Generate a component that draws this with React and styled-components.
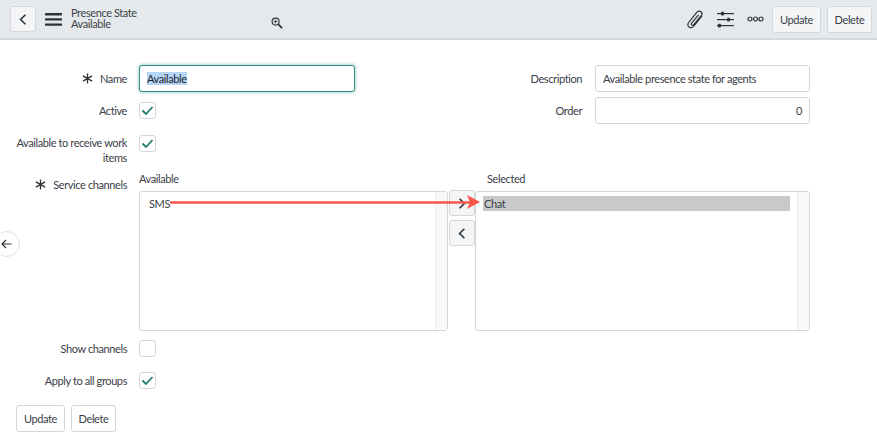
import styled, { createGlobalStyle } from 'styled-components';

const GlobalStyle = createGlobalStyle`
  html, body {
    margin: 0;
    padding: 0;
    background: #ffffff;
  }
  body {
    font-family: Lato, "Open Sans", sans-serif;
    font-size: 11px;
    letter-spacing: -0.4px;
    color: #3a4048;
    overflow: hidden;
  }
`;

const Page = styled.div`
  position: relative;
  width: 877px;
  height: 437px;
  overflow: hidden;
`;

// top bar
const Header = styled.header`
  display: flex;
  align-items: center;
  height: 38px;
  padding: 0 5px 0 10px;
  background: #e6e9eb;
  border-bottom: 2px solid #d6d9dc;
`;

const IconButton = styled.button`
  display: flex;
  align-items: center;
  justify-content: center;
  width: 26px;
  height: 26px;
  padding: 0;
  background: #f4f5f6;
  border: 1px solid #d4d6d9;
  border-radius: 3px;
  color: #2e3338;
`;

const Menu = styled.div`
  display: flex;
  margin-left: 9px;
  color: #2e3338;
`;

const HeaderTitle = styled.div`
  margin: -2px 0 0 9px;
  width: 200px;
  line-height: 11.5px;
  font-size: 11px;
  color: #3d4348;
`;

const Spacer = styled.div`
  flex: 1;
`;

const Tool = styled.div`
  display: flex;
  margin-top: ${(props) => props.$top || 0}px;
  margin-right: ${(props) => props.$gap || 0}px;
  color: #2e3338;
`;

const TextButton = styled.button`
  width: ${(props) => props.$width}px;
  height: 27px;
  padding: 0;
  margin-left: ${(props) => props.$gap || 0}px;
  background: ${(props) => (props.$plain ? '#ffffff' : '#f4f5f6')};
  border: 1px solid #d4d6d9;
  border-radius: 3px;
  font-family: inherit;
  font-size: 11px;
  letter-spacing: inherit;
  color: #3a4048;
`;

// form
const Form = styled.form`
  padding-top: 25px;
`;

const TopRows = styled.div`
  display: flex;
`;

const Column = styled.div`
  display: flex;
  flex-direction: column;
  width: ${(props) => props.$width}px;
`;

const Row = styled.div`
  display: flex;
  align-items: ${(props) => (props.$top ? 'flex-start' : 'center')};
  min-height: ${(props) => props.$height || 27}px;
  margin-bottom: ${(props) => props.$gap ?? 5}px;
`;

const Label = styled.label`
  display: flex;
  align-items: center;
  justify-content: flex-end;
  flex: none;
  width: ${(props) => props.$width || 127}px;
  margin-top: ${(props) => props.$offset || 0}px;
  margin-right: ${(props) => props.$margin || 12}px;
  line-height: 15px;
  text-align: right;
`;

const Required = styled.span`
  display: flex;
  margin-right: 7px;
  color: #2e3338;
`;

const TextInput = styled.div`
  box-sizing: border-box;
  display: flex;
  align-items: center;
  justify-content: ${(props) => (props.$right ? 'flex-end' : 'flex-start')};
  width: ${(props) => props.$width || 215}px;
  height: 27px;
  padding: 0 7px;
  background: #ffffff;
  border: 1px solid ${(props) => (props.$focused ? '#2f8f80' : '#d4d6d9')};
  border-radius: 3px;
  box-shadow: ${(props) => (props.$focused ? '0 0 3px 1px rgba(47, 143, 128, 0.35)' : 'none')};
`;

const Selection = styled.span`
  background: #b5d5fb;
  color: #1f2429;
`;

const CheckBox = styled.span`
  box-sizing: border-box;
  display: flex;
  align-items: center;
  justify-content: center;
  width: 17px;
  height: 17px;
  background: #ffffff;
  border: 1px solid #d4d6d9;
  border-radius: 3px;
  color: #1f7f6e;
`;

// slush bucket
const Bucket = styled.div`
  display: flex;
  flex-direction: column;
  width: ${(props) => props.$width}px;
`;

const BucketTitle = styled.div`
  height: 20px;
  padding-left: ${(props) => props.$indent || 0}px;
  line-height: 16px;
`;

const ListBox = styled.div`
  box-sizing: border-box;
  position: relative;
  height: 140px;
  padding: 4px 7px;
  background: #ffffff;
  border: 1px solid #d4d6d9;
  border-radius: 3px;
  &::after {
    content: '';
    position: absolute;
    top: 0;
    right: 0;
    bottom: 0;
    width: 11px;
    background: #f8f8f8;
    border-left: 1px solid #ececec;
  }
`;

const ListItem = styled.div`
  height: 15px;
  padding-left: ${(props) => (props.$selected ? 1 : 2)}px;
  width: ${(props) => props.$width}px;
  line-height: 16px;
  background: ${(props) => (props.$selected ? '#c9c9c9' : 'transparent')};
`;

const Mover = styled.div`
  display: flex;
  flex-direction: column;
  gap: 4px;
  width: 27px;
  margin-top: 19px;
  padding-left: 1px;
  box-sizing: border-box;
`;

const BackTab = styled.div`
  position: absolute;
  left: -6px;
  top: 231px;
  display: flex;
  align-items: center;
  justify-content: flex-end;
  box-sizing: border-box;
  width: 26px;
  height: 26px;
  padding-right: 7px;
  background: #ffffff;
  border: 1px solid #e0e2e4;
  border-radius: 50%;
  color: #2e3338;
`;

const BottomBar = styled.div`
  display: flex;
  gap: 6px;
  padding-left: 16px;
  margin-top: 16px;
`;

const Callout = styled.svg`
  position: absolute;
  left: 0;
  top: 0;
  pointer-events: none;
`;

const Asterisk = () => (
  <svg width="11" height="11" viewBox="0 0 12 12" stroke="currentColor" strokeWidth="1.4">
    <path d="M6 0.5V11.5M1 3.2L11 8.8M11 3.2L1 8.8" />
  </svg>
);

const Check = () => (
  <svg width="13" height="11" viewBox="0 0 13 11" fill="none" stroke="currentColor" strokeWidth="1.8">
    <path d="M1.5 5.5L5 9L11.5 2" />
  </svg>
);

const Chevron = ({ right }) => (
  <svg width="8" height="13" viewBox="0 0 10 16" fill="none" stroke="currentColor" strokeWidth="2">
    <path d={right ? 'M2 2L8 8L2 14' : 'M8 2L2 8L8 14'} />
  </svg>
);

function App() {
  return (
    <Page>
      <GlobalStyle />
      <Header>
        <IconButton type="button">
          <Chevron />
        </IconButton>
        <Menu>
          <svg width="17" height="13" viewBox="0 0 17 13" fill="currentColor">
            <rect width="17" height="2.4" rx="0.6" />
            <rect y="5.2" width="17" height="2.4" rx="0.6" />
            <rect y="10.4" width="17" height="2.4" rx="0.6" />
          </svg>
        </Menu>
        <HeaderTitle>
          Presence State
          <br />
          Available
        </HeaderTitle>
        <Tool $top={7}>
          <svg width="12" height="12" viewBox="0 0 13 13" fill="none" stroke="currentColor">
            <circle cx="5" cy="5" r="3.8" strokeWidth="1.2" />
            <path d="M8 8L12 12" strokeWidth="2" />
            <path d="M3.2 5H6.8M5 3.2V6.8" strokeWidth="1" />
          </svg>
        </Tool>
        <Spacer />
        <Tool $gap={13}>
          <svg width="17" height="19" viewBox="0 0 17 19" fill="none" stroke="currentColor" strokeWidth="1.2">
            <path d="M15 6L7 16C5.5 18 3 18 1.8 16.8C0.6 15.6 0.8 13.5 2 12L10 2.2C11 1 12.8 0.8 14 1.8C15.2 2.8 15.2 4.4 14.2 5.6L6.8 14.6C6.2 15.4 5.2 15.4 4.7 15C4.2 14.5 4.2 13.6 4.8 12.9L11.5 4.8" />
          </svg>
        </Tool>
        <Tool $gap={13}>
          <svg width="17" height="17" viewBox="0 0 17 17" fill="currentColor">
            <rect y="2" width="17" height="1.2" />
            <rect x="4" y="0.8" width="3" height="3.6" rx="1" />
            <rect y="8" width="17" height="1.2" />
            <rect x="10" y="6.8" width="3" height="3.6" rx="1" />
            <rect y="14" width="17" height="1.2" />
            <rect x="1" y="12.8" width="3" height="3.6" rx="1" />
          </svg>
        </Tool>
        <Tool $gap={8}>
          <svg width="17" height="6" viewBox="0 0 17 6" fill="none" stroke="currentColor" strokeWidth="1.2">
            <circle cx="3" cy="3" r="2" />
            <circle cx="8.5" cy="3" r="2" />
            <circle cx="14" cy="3" r="2" />
          </svg>
        </Tool>
        <TextButton type="button" $width={49}>Update</TextButton>
        <TextButton type="button" $width={45} $gap={6}>Delete</TextButton>
      </Header>

      <Form>
        <TopRows>
          <Column $width={456}>
            <Row>
              <Label>
                <Required><Asterisk /></Required>
                Name
              </Label>
              <TextInput $focused $width={216}>
                <Selection>Available</Selection>
              </TextInput>
            </Row>
            <Row $gap={11}>
              <Label>Active</Label>
              <CheckBox><Check /></CheckBox>
            </Row>
            <Row $top $height={30} $gap={6}>
              <Label>Available to receive work items</Label>
              <CheckBox><Check /></CheckBox>
            </Row>
          </Column>
          <Column $width={354}>
            <Row>
              <Label $width={126} $margin={13}>Description</Label>
              <TextInput>Available presence state for agents</TextInput>
            </Row>
            <Row>
              <Label $width={126} $margin={13}>Order</Label>
              <TextInput $right>0</TextInput>
            </Row>
          </Column>
        </TopRows>

        <Row $top $height={160} $gap={9}>
          <Label $offset={6}>
            <Required><Asterisk /></Required>
            Service channels
          </Label>
          <Bucket $width={309}>
            <BucketTitle>Available</BucketTitle>
            <ListBox>
              <ListItem>SMS</ListItem>
            </ListBox>
          </Bucket>
          <Mover>
            <IconButton type="button"><Chevron right /></IconButton>
            <IconButton type="button"><Chevron /></IconButton>
          </Mover>
          <Bucket $width={335}>
            <BucketTitle $indent={12}>Selected</BucketTitle>
            <ListBox>
              <ListItem $selected $width={306}>Chat</ListItem>
            </ListBox>
          </Bucket>
        </Row>

        <Row $height={17} $gap={15}>
          <Label>Show channels</Label>
          <CheckBox />
        </Row>
        <Row $height={17} $gap={0}>
          <Label>Apply to all groups</Label>
          <CheckBox><Check /></CheckBox>
        </Row>
        <BottomBar>
          <TextButton type="button" $plain $width={49}>Update</TextButton>
          <TextButton type="button" $plain $width={45}>Delete</TextButton>
        </BottomBar>
      </Form>

      <BackTab>
        <svg width="11" height="10" viewBox="0 0 11 10" fill="none" stroke="currentColor" strokeWidth="1.2">
          <path d="M10.5 5H1M5 1L1 5L5 9" />
        </svg>
      </BackTab>

      {/* red annotation arrow drawn over the screenshot */}
      <Callout width="877" height="437" viewBox="0 0 877 437">
        <path d="M171 202.5H470" stroke="#f9574e" strokeWidth="2.6" strokeLinecap="round" />
        <path d="M480 202L467 195L470 202.5L467 209Z" fill="#f9574e" />
      </Callout>
    </Page>
  );
}

export default App;
